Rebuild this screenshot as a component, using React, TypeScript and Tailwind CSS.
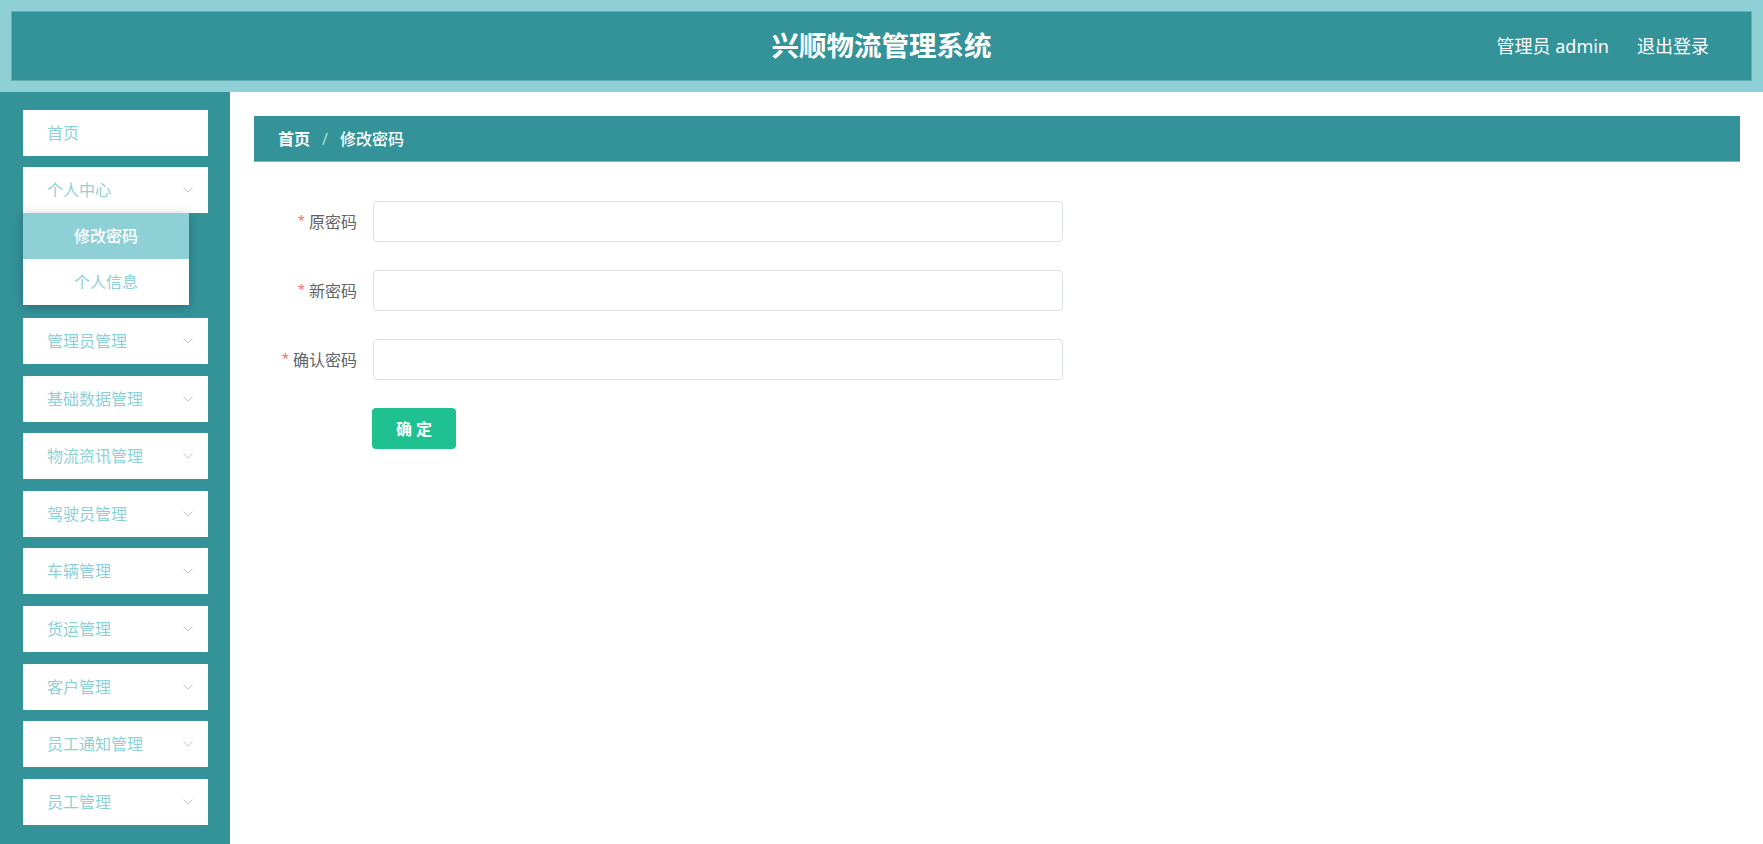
import React from "react";

const font = { fontFamily: '"Noto Sans", "Noto Sans CJK SC", sans-serif' };

function Chevron() {
  return (
    <svg width="12" height="8" viewBox="0 0 12 8" fill="none">
      <path d="M1.5 1.5 L6 6 L10.5 1.5" stroke="#c0c4cc" strokeWidth="1" />
    </svg>
  );
}

const menus = [
  "管理员管理",
  "基础数据管理",
  "物流资讯管理",
  "驾驶员管理",
  "车辆管理",
  "货运管理",
  "客户管理",
  "员工通知管理",
  "员工管理",
];

function MenuItem({ label, arrow = true }: { label: string; arrow?: boolean }) {
  return (
    <div className="ml-[23px] w-[185px] h-[46px] bg-white flex items-center justify-between pl-[24px] pr-[14px] text-[16px] text-[#8fd0d6] shrink-0">
      <span>{label}</span>
      {arrow && <Chevron />}
    </div>
  );
}

function Field({ label }: { label: string }) {
  return (
    <div className="flex items-center h-[41px]">
      <div className="w-[119px] pr-[16px] flex justify-end items-center text-[16px] text-[#606266]">
        <span className="text-[#f56c6c] text-[13px] mr-[4px] -mt-[2px]">*</span>
        <span>{label}</span>
      </div>
      <input
        type="password"
        className="w-[690px] h-[41px] border border-[#dcdfe6] rounded-[4px] bg-white outline-none px-[15px]"
      />
    </div>
  );
}

export default function App() {
  return (
    <div className="w-[1763px] h-[844px] flex flex-col overflow-hidden bg-white" style={font}>
      <header className="h-[92px] bg-[#8fd0d6] pt-[11px] pb-[11px] px-[11px] shrink-0">
        <div className="h-full bg-[#339399] border border-[#5fb0b5] relative flex items-center justify-end pr-[42px]">
          <div className="absolute left-0 right-0 top-0 bottom-0 flex items-center justify-center pointer-events-none">
            <span className="text-white font-bold text-[27.5px] tracking-[0px]">兴顺物流管理系统</span>
          </div>
          <div className="flex items-center gap-[28px] text-white text-[18px]">
            <span>管理员 admin</span>
            <span>退出登录</span>
          </div>
        </div>
      </header>
      <div className="flex flex-1 min-h-0">
        <aside className="w-[230px] bg-[#339399] pt-[18px] flex flex-col shrink-0">
          <MenuItem label="首页" arrow={false} />
          <div className="h-[11px] shrink-0" />
          <MenuItem label="个人中心" />
          <div className="ml-[23px] w-[166px] bg-white shadow-[0_2px_10px_rgba(0,0,0,0.25)] shrink-0 relative z-10">
            <div className="h-[46px] bg-[#8fd0d6] text-white text-[16px] flex items-center justify-center font-medium">修改密码</div>
            <div className="h-[46px] bg-white text-[#8fd0d6] text-[16px] flex items-center justify-center">个人信息</div>
          </div>
          <div className="h-[13px] shrink-0" />
          <div className="flex flex-col gap-[11.6px]">
            {menus.map((m) => (
              <MenuItem key={m} label={m} />
            ))}
          </div>
        </aside>
        <main className="flex-1 pl-[24px] pr-[23px] pt-[24px]">
          <div className="h-[46px] bg-[#339399] border-b border-[#6fbcc1] flex items-center pl-[24px] text-[16px] text-white">
            <span className="font-bold">首页</span>
            <span className="mx-[12px] text-[#b4dde0]">/</span>
            <span className="font-medium">修改密码</span>
          </div>
          <div className="pt-[39px] flex flex-col gap-[28px]">
            <Field label="原密码" />
            <Field label="新密码" />
            <Field label="确认密码" />
            <div className="pl-[118px]">
              <button className="w-[84px] h-[41px] rounded-[4px] bg-[#1fc190] text-white font-bold text-[16px] tracking-[4px] pl-[4px]">
                确定
              </button>
            </div>
          </div>
        </main>
      </div>
    </div>
  );
}
